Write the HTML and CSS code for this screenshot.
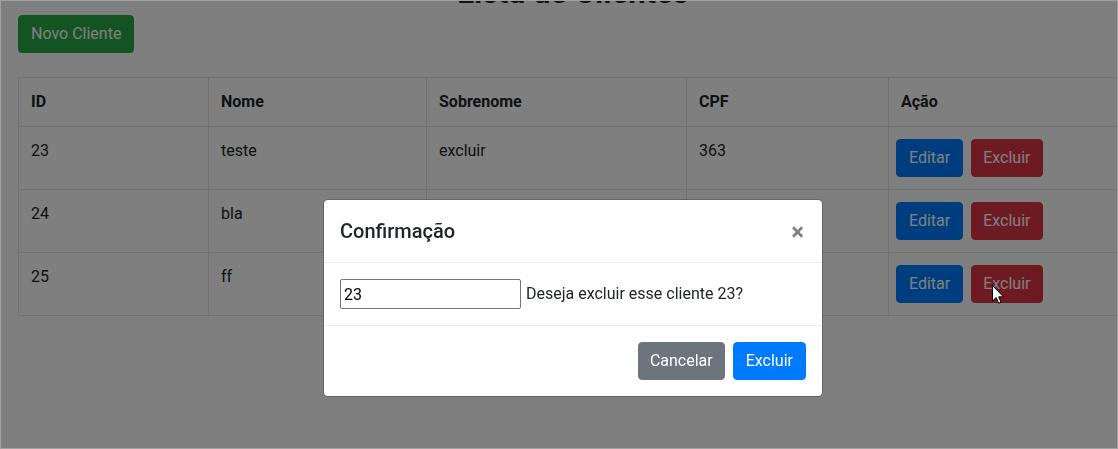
FILE: index.html
```html
<!DOCTYPE html>
<html lang="pt-BR">
<head>
<meta charset="utf-8">
<title>Lista de Clientes</title>
<link rel="stylesheet" href="styles.css">
</head>
<body>
<div class="page">
  <h2 class="title">Lista de Clientes</h2>
  <div class="toolbar">
    <button class="btn btn-success">Novo Cliente</button>
  </div>
  <table class="table">
    <colgroup>
      <col class="col-id"><col class="col-nome"><col class="col-sobrenome"><col class="col-cpf"><col class="col-acao">
    </colgroup>
    <thead>
      <tr><th>ID</th><th>Nome</th><th>Sobrenome</th><th>CPF</th><th>Ação</th></tr>
    </thead>
    <tbody>
      <tr>
        <td>23</td><td>teste</td><td>excluir</td><td>363</td>
        <td class="cell-actions"><div class="actions"><button class="btn btn-primary">Editar</button><button class="btn btn-danger">Excluir</button></div></td>
      </tr>
      <tr>
        <td>24</td><td>bla</td><td></td><td></td>
        <td class="cell-actions"><div class="actions"><button class="btn btn-primary">Editar</button><button class="btn btn-danger">Excluir</button></div></td>
      </tr>
      <tr>
        <td>25</td><td>ff</td><td></td><td></td>
        <td class="cell-actions"><div class="actions"><button class="btn btn-primary">Editar</button><button class="btn btn-danger">Excluir</button></div></td>
      </tr>
    </tbody>
  </table>
</div>

<div class="backdrop"></div>

<div class="modal" role="dialog">
  <div class="modal-header">
    <h5 class="modal-title">Confirmação</h5>
    <button class="close" aria-label="Fechar">×</button>
  </div>
  <div class="modal-body">
    <input class="id-input" type="text" value="23">
    <span class="modal-text">Deseja excluir esse cliente 23?</span>
  </div>
  <div class="modal-footer">
    <button class="btn btn-secondary">Cancelar</button>
    <button class="btn btn-primary">Excluir</button>
  </div>
</div>

<svg class="cursor" width="13" height="20" viewBox="0 0 13 20" aria-hidden="true">
  <path d="M0.5 0.5 L0.5 16 L4.2 12.5 L6.6 18.3 L9 17.3 L6.7 11.8 L11.5 11.8 Z" fill="#fff" stroke="#000" stroke-width="1" stroke-linejoin="miter"/>
</svg>

<div class="frame"></div>
</body>
</html>
```
FILE: styles.css
```css
* { box-sizing: border-box; }

html, body {
  margin: 0;
  height: 100%;
}

body {
  overflow: hidden;
  font-family: Roboto, "Liberation Sans", sans-serif;
  font-size: 16px;
  line-height: 1.5;
  color: #212529;
  background: #fff;
}

.page {
  width: 1146px;
  padding: 0 18px;
}

.title {
  margin: -26px 0 3px;
  font-size: 31px;
  font-weight: 700;
  line-height: 38px;
  text-align: center;
}

.toolbar {
  display: flex;
}

.btn {
  display: inline-block;
  font: inherit;
  font-weight: 400;
  line-height: 24px;
  padding: 6px 12px;
  border: 1px solid transparent;
  border-radius: 4px;
  color: #fff;
  cursor: pointer;
  white-space: nowrap;
}

.btn-success { background: #28a745; border-color: #28a745; }
.btn-primary { background: #007bff; border-color: #007bff; }
.btn-danger { background: #dc3545; border-color: #dc3545; }
.btn-secondary { background: #6c757d; border-color: #6c757d; }

.table {
  width: 100%;
  margin-top: 24px;
  border-collapse: collapse;
  table-layout: fixed;
}

.col-id { width: 190px; }
.col-nome { width: 218px; }
.col-sobrenome { width: 260px; }
.col-cpf { width: 202px; }
.col-acao { width: 240px; }

.table th,
.table td {
  padding: 12px;
  border: 1px solid #dee2e6;
  text-align: left;
  vertical-align: top;
}

.table th {
  font-weight: 700;
}

.table td.cell-actions {
  padding-left: 7px;
}

.actions {
  display: flex;
  gap: 8px;
}

.actions .btn-danger {
  padding: 6px 11px;
}

.backdrop {
  position: fixed;
  inset: 0;
  background: rgba(0, 0, 0, 0.5);
}

.modal {
  position: fixed;
  top: 199px;
  left: 323px;
  width: 500px;
  background: #fff;
  border: 1px solid rgba(0, 0, 0, 0.2);
  border-radius: 5px;
  background-clip: padding-box;
}

.modal-header {
  display: flex;
  align-items: flex-start;
  padding: 16px;
  border-bottom: 1px solid #e9ecef;
}

.modal-title {
  margin: 0;
  font-size: 20px;
  font-weight: 500;
  line-height: 30px;
}

.close {
  margin: -16px -16px -16px auto;
  padding: 20px 18px 12px 16px;
  font-family: inherit;
  font-size: 24px;
  font-weight: 700;
  line-height: 24px;
  color: #000;
  opacity: 0.5;
  background: transparent;
  border: 0;
}

.modal-body {
  display: flex;
  align-items: center;
  padding: 16px;
}

.id-input {
  width: 181px;
  height: 30px;
  padding: 1px 3px;
  font: inherit;
  color: #000;
  border: 1px solid #767676;
  border-radius: 2px;
  background: #fff;
}

.modal-text {
  margin-left: 5px;
}

.modal-footer {
  display: flex;
  justify-content: flex-end;
  gap: 8px;
  padding: 16px;
  border-top: 1px solid #e9ecef;
}

.modal-footer .btn-secondary {
  padding: 6px 11px;
}

.cursor {
  position: fixed;
  left: 992px;
  top: 285px;
}

.frame {
  position: fixed;
  inset: 0;
  border: 1px solid #a0a0a0;
  pointer-events: none;
}
```
